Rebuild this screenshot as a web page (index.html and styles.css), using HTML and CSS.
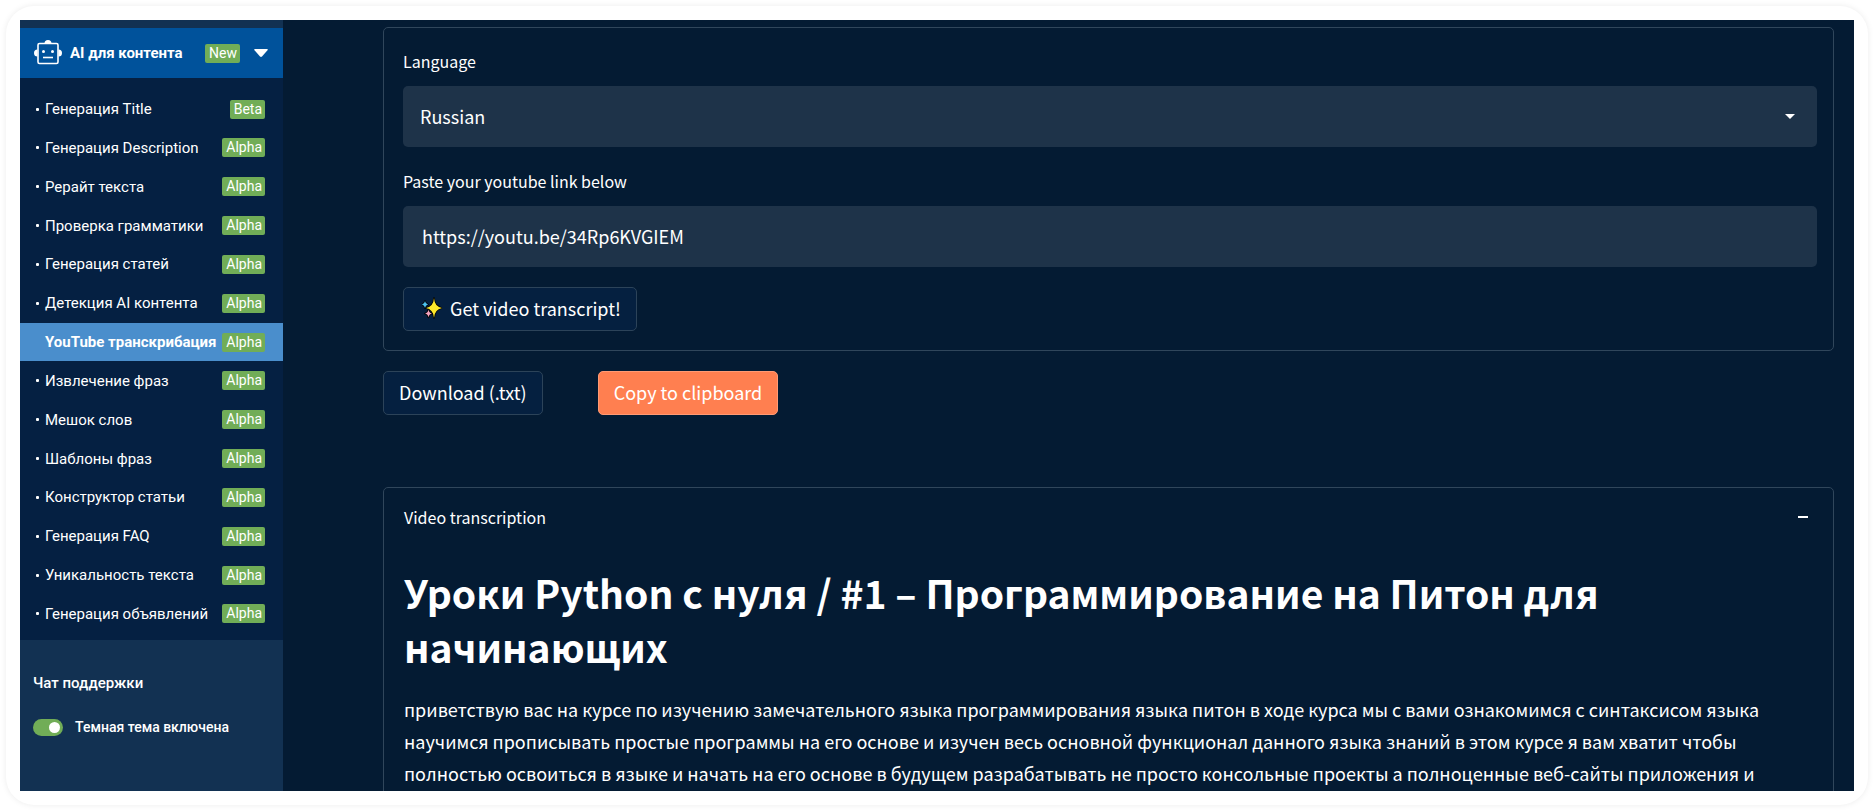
FILE: index.html
```html
<!DOCTYPE html>
<html lang="ru">
<head>
<meta charset="utf-8">
<title>YouTube транскрибация</title>
<link rel="stylesheet" href="styles.css">
</head>
<body>
<div class="frame">
<div class="screen">
  <aside class="sidebar">
    <button class="section" type="button" aria-expanded="true">
      <svg class="robot" viewBox="0 0 28 26" aria-hidden="true">
        <path d="M10.500 3.500a3.500 3.500 0 0 1 7 0zM3.500 9.500v7a3.500 3.500 0 0 1 0-7zM24.500 9.500v7a3.500 3.500 0 0 0 0-7z" fill="#fff"/>
        <rect x="4" y="3.500" width="20" height="20" rx="1.500" fill="none" stroke="#fff" stroke-width="1.600"/>
        <circle cx="9.500" cy="11.500" r="1.500" fill="#fff"/>
        <circle cx="18.500" cy="11.500" r="1.500" fill="#fff"/>
        <path d="M9 17.500h10" stroke="#fff" stroke-width="1.600"/>
      </svg>
      <span class="section-title">AI для контента</span>
      <span class="badge">New</span>
      <svg class="chevron" viewBox="0 0 14 8" aria-hidden="true"><path d="M1 0h12q1.300.300.500 1.300L8 7.500q-1 .900-2 0L.500 1.300Q-.300.300 1 0z" fill="#fff"/></svg>
    </button>
    <nav class="menu">
      <a class="item" href="#"><span class="name">Генерация Title</span><span class="badge">Beta</span></a>
      <a class="item" href="#"><span class="name">Генерация Description</span><span class="badge">Alpha</span></a>
      <a class="item" href="#"><span class="name">Рерайт текста</span><span class="badge">Alpha</span></a>
      <a class="item" href="#"><span class="name">Проверка грамматики</span><span class="badge">Alpha</span></a>
      <a class="item" href="#"><span class="name">Генерация статей</span><span class="badge">Alpha</span></a>
      <a class="item" href="#"><span class="name">Детекция AI контента</span><span class="badge">Alpha</span></a>
      <a class="item active" href="#" aria-current="page"><span class="name">YouTube транскрибация</span><span class="badge">Alpha</span></a>
      <a class="item" href="#"><span class="name">Извлечение фраз</span><span class="badge">Alpha</span></a>
      <a class="item" href="#"><span class="name">Мешок слов</span><span class="badge">Alpha</span></a>
      <a class="item" href="#"><span class="name">Шаблоны фраз</span><span class="badge">Alpha</span></a>
      <a class="item" href="#"><span class="name">Конструктор статьи</span><span class="badge">Alpha</span></a>
      <a class="item" href="#"><span class="name">Генерация FAQ</span><span class="badge">Alpha</span></a>
      <a class="item" href="#"><span class="name">Уникальность текста</span><span class="badge">Alpha</span></a>
      <a class="item" href="#"><span class="name">Генерация объявлений</span><span class="badge">Alpha</span></a>
    </nav>
    <div class="support">
      <a class="chat" href="#">Чат поддержки</a>
      <label class="theme"><input class="switch" type="checkbox" role="switch" checked><span>Темная тема включена</span></label>
    </div>
  </aside>
  <main class="content">
    <form class="panel form">
      <label class="label" for="language">Language</label>
      <div class="select-wrap">
        <select class="field" id="language"><option>Russian</option></select>
        <svg class="caret" viewBox="0 0 10 5" aria-hidden="true"><path d="M0 0h10L5 5z" fill="#fff"/></svg>
      </div>
      <label class="label" for="link">Paste your youtube link below</label>
      <input class="field link" id="link" type="text" value="https://youtu.be/34Rp6KVGIEM">
      <button class="button submit" type="button">
        <svg class="sparkles" viewBox="0 0 20 22" aria-hidden="true">
          <g stroke="#000" stroke-width="1.600" stroke-linejoin="round" paint-order="stroke">
            <path d="M12 1q.500 8.500 8 10-7.500 1.500-8 10-.500-8.500-8-10 7.500-1.500 8-10z" fill="#fde92b"/>
            <path d="M3 4q.500 3 3 3.500-2.500.500-3 3.500-.500-3-3-3.500Q2.500 7 3 4z" fill="#4cc2f1"/>
            <path d="M6.500 12.500q.500 3.500 3.500 4-3 .500-3.500 4-.500-3.500-3.500-4 3-.500 3.500-4z" fill="#f4a3c0"/>
          </g>
        </svg>
        <span>Get video transcript!</span>
      </button>
    </form>
    <div class="actions">
      <button class="button" type="button">Download (.txt)</button>
      <button class="button primary" type="button">Copy to clipboard</button>
    </div>
    <details class="panel transcript" open>
      <summary class="summary"><span>Video transcription</span><svg class="minus" viewBox="0 0 10 2" aria-hidden="true"><path d="M0 0h10v2H0z" fill="#fff"/></svg></summary>
      <h1 class="title">Уроки Python с нуля / #1 – Программирование на Питон для начинающих</h1>
      <p class="text">приветствую вас на курсе по изучению замечательного языка программирования языка питон в ходе курса мы с вами ознакомимся с синтаксисом языка научимся прописывать простые программы на его основе и изучен весь основной функционал данного языка знаний в этом курсе я вам хватит чтобы полностью освоиться в языке и начать на его основе в будущем разрабатывать не просто консольные проекты а полноценные веб-сайты приложения и</p>
    </details>
  </main>
</div>
</div>
</body>
</html>
```

FILE: styles.css
```css
* { box-sizing: border-box; }

body {
  margin: 0;
  height: 100vh;
  padding: 6px;
  background: #fff;
  color: #fff;
  font-family: "Noto Sans CJK SC", "Noto Sans", sans-serif;
  font-size: 18px;
  overflow: hidden;
}

a { color: inherit; text-decoration: none; }

.frame {
  height: 100%;
  padding: 14px;
  border-radius: 28px;
  background: #fff;
  box-shadow: 0 0 6px rgba(0, 0, 0, 0.08);
}

.screen {
  display: flex;
  height: 100%;
  background: #041b33;
  overflow: hidden;
}

.sidebar {
  display: flex;
  flex: none;
  flex-direction: column;
  width: 263px;
  padding-top: 8px;
  background: #123152;
  font-family: Roboto, sans-serif;
  font-size: 15px;
}

.section {
  display: flex;
  align-items: center;
  height: 50px;
  padding: 0 15px 0 14px;
  border: 0;
  background: #00529b;
  color: #fff;
  font: inherit;
  font-weight: 700;
  text-align: left;
}

.robot { width: 28px; height: 26px; margin-right: 8px; }
.section-title { flex: 1; }
.chevron { width: 14px; height: 8px; margin-left: 14px; }

.badge {
  padding: 0 3px 0 4px;
  border-radius: 2px;
  background: #71ad57;
  color: #fff;
  font-size: 14px;
  font-weight: 400;
  line-height: 19px;
}

.menu {
  display: flex;
  flex: 1;
  flex-direction: column;
  justify-content: space-between;
  padding: 12px 0 7px;
  background: #052042;
}

.item {
  display: flex;
  align-items: center;
  height: 38px;
  padding: 0 18px 0 16px;
}

.item::before {
  content: "";
  width: 3px;
  height: 3px;
  margin-right: 6px;
  border-radius: 1px;
  background: #fff;
}

.name { flex: 1; white-space: nowrap; }
.active { background: #4a8ecc; font-weight: 700; }
.active::before { background: transparent; }

.support {
  display: flex;
  flex-direction: column;
  gap: 24px;
  padding: 33px 13px 54px;
  font-weight: 500;
  line-height: 20px;
}

.theme { display: flex; align-items: center; gap: 12px; font-size: 14px; }

.switch {
  display: flex;
  align-items: center;
  justify-content: flex-end;
  appearance: none;
  width: 30px;
  height: 17px;
  margin: 0;
  padding: 3px;
  border-radius: 9px;
  background: #71ad57;
}

.switch::before {
  content: "";
  width: 11px;
  height: 11px;
  border-radius: 50%;
  background: #fff;
}

.content {
  display: flex;
  flex: 1;
  flex-direction: column;
  gap: 20px;
  min-width: 0;
  padding: 7px 20px 0 100px;
}

.panel {
  flex: none;
  border: 1px solid #30465b;
  border-radius: 5px;
}

.form {
  display: flex;
  flex-direction: column;
  padding: 19px 16px 19px 19px;
}

.label {
  margin-bottom: 11px;
  font-size: 16px;
  line-height: 28px;
}

.select-wrap { position: relative; margin-bottom: 20px; }

.field {
  display: block;
  appearance: none;
  width: 100%;
  height: 61px;
  padding: 0 17px 2px;
  border: 0;
  border-radius: 5px;
  background: #1e3349;
  color: #fff;
  font: inherit;
}

.link { margin-bottom: 20px; padding: 0 19px 2px; }
.caret { position: absolute; top: 28px; right: 22px; width: 10px; height: 5px; }

.button {
  display: flex;
  align-items: center;
  height: 44px;
  padding: 0 15px 2px;
  border: 1px solid #2c4359;
  border-radius: 5px;
  background: #052040;
  color: #fff;
  font: inherit;
}

.submit { align-self: flex-start; gap: 8px; padding-left: 18px; }
.sparkles { width: 20px; height: 22px; }
.actions { display: flex; gap: 55px; margin-bottom: 52px; }
.primary { border-color: #ff9a74; background: #ff7f50; }

.transcript { padding: 15px 25px 40px 20px; }

.summary {
  display: flex;
  align-items: center;
  justify-content: space-between;
  margin-bottom: 34px;
  font-size: 16px;
  line-height: 28px;
  list-style: none;
}

.minus { width: 10px; height: 2px; }

.title {
  margin: 0;
  font-size: 39px;
  font-weight: 700;
  line-height: 54px;
}

.text { margin: 20px 0 0; padding-right: 40px; line-height: 32px; }
```
